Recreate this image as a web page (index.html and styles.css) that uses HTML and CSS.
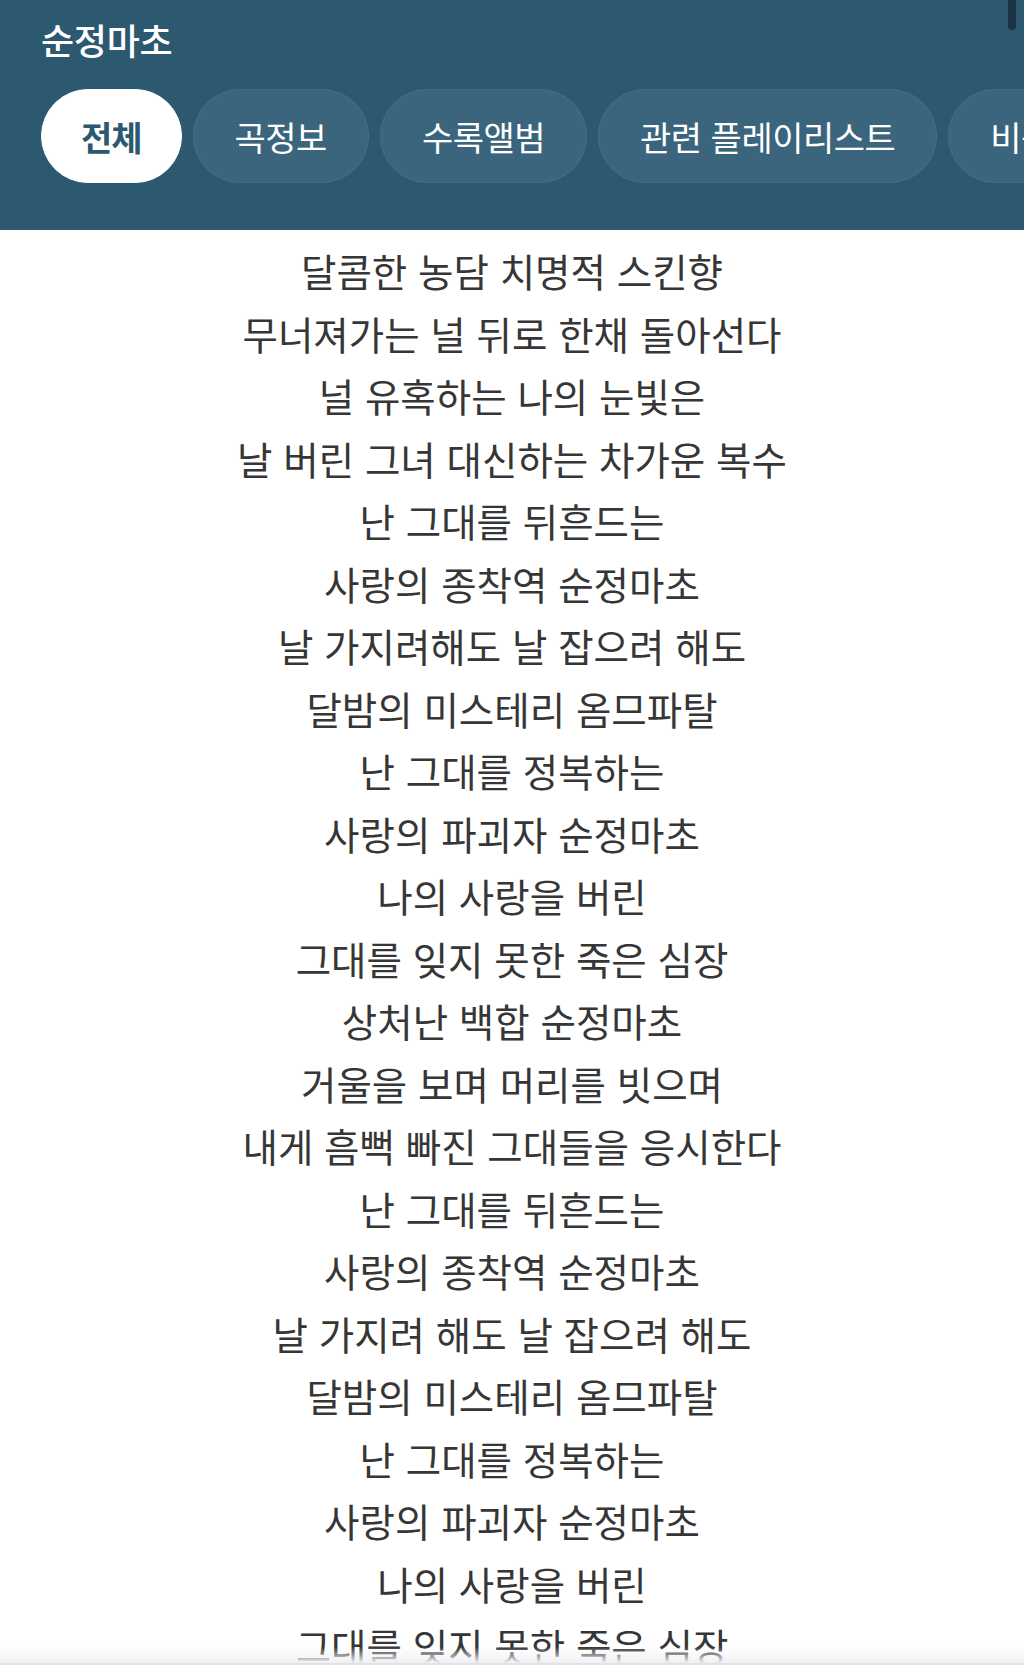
FILE: index.html
```html
<!DOCTYPE html>
<html lang="ko">
<head>
<meta charset="utf-8">
<title>순정마초</title>
<link rel="stylesheet" href="styles.css">
</head>
<body>
<header class="header">
  <h1 class="title">순정마초</h1>
  <nav class="chips">
    <span class="chip chip-active">전체</span>
    <span class="chip">곡정보</span>
    <span class="chip">수록앨범</span>
    <span class="chip">관련 플레이리스트</span>
    <span class="chip">비슷한 곡</span>
  </nav>
  <div class="scroll-thumb"></div>
</header>
<main class="lyrics">
  <p>달콤한 농담 치명적 스킨향</p>
  <p>무너져가는 널 뒤로 한채 돌아선다</p>
  <p>널 유혹하는 나의 눈빛은</p>
  <p>날 버린 그녀 대신하는 차가운 복수</p>
  <p>난 그대를 뒤흔드는</p>
  <p>사랑의 종착역 순정마초</p>
  <p>날 가지려해도 날 잡으려 해도</p>
  <p>달밤의 미스테리 옴므파탈</p>
  <p>난 그대를 정복하는</p>
  <p>사랑의 파괴자 순정마초</p>
  <p>나의 사랑을 버린</p>
  <p>그대를 잊지 못한 죽은 심장</p>
  <p>상처난 백합 순정마초</p>
  <p>거울을 보며 머리를 빗으며</p>
  <p>내게 흠뻑 빠진 그대들을 응시한다</p>
  <p>난 그대를 뒤흔드는</p>
  <p>사랑의 종착역 순정마초</p>
  <p>날 가지려 해도 날 잡으려 해도</p>
  <p>달밤의 미스테리 옴므파탈</p>
  <p>난 그대를 정복하는</p>
  <p>사랑의 파괴자 순정마초</p>
  <p>나의 사랑을 버린</p>
  <p>그대를 잊지 못한 죽은 심장</p>
  <p>상처난 백합 순정마초</p>
</main>
<div class="bottom-fade"></div>
</body>
</html>
```

FILE: styles.css
```css
html, body {
  margin: 0;
  padding: 0;
  background: #ffffff;
  font-family: "Noto Sans CJK KR", "Noto Sans", sans-serif;
}
.header {
  position: relative;
  background: #2c5970;
  height: 230px;
  box-sizing: border-box;
  padding: 14px 0 0 41px;
  overflow: hidden;
}
.title {
  margin: 0;
  color: #ffffff;
  font-size: 36px;
  font-weight: 500;
  line-height: 50px;
  letter-spacing: -0.3px;
}
.chips {
  display: flex;
  gap: 11px;
  margin-top: 25px;
  white-space: nowrap;
}
.chip {
  flex: none;
  box-sizing: border-box;
  height: 94px;
  display: flex;
  align-items: center;
  padding: 0 41px;
  border-radius: 47px;
  background: #3a657c;
  border: 1.5px solid #456f85;
  color: #ffffff;
  font-size: 34px;
  letter-spacing: -0.5px;
}
.chip-active {
  padding: 0 39px;
  background: #ffffff;
  border-color: #ffffff;
  color: #2c5970;
  font-weight: 700;
  letter-spacing: -1px;
}
.scroll-thumb {
  position: absolute;
  top: -6px;
  right: 8px;
  width: 8px;
  height: 36px;
  border-radius: 4px;
  background: #1b3443;
}
.lyrics {
  padding-top: 9px;
  text-align: center;
  color: #363636;
}
.lyrics p {
  margin: 0;
  font-size: 38.5px;
  line-height: 62.5px;
}
.bottom-fade {
  position: fixed;
  left: 0;
  right: 0;
  bottom: 0;
  height: 16px;
  background: linear-gradient(to bottom, rgba(244,244,247,0), #f1f1f4);
  border-bottom: 2px solid #e2e2e6;
}
```
